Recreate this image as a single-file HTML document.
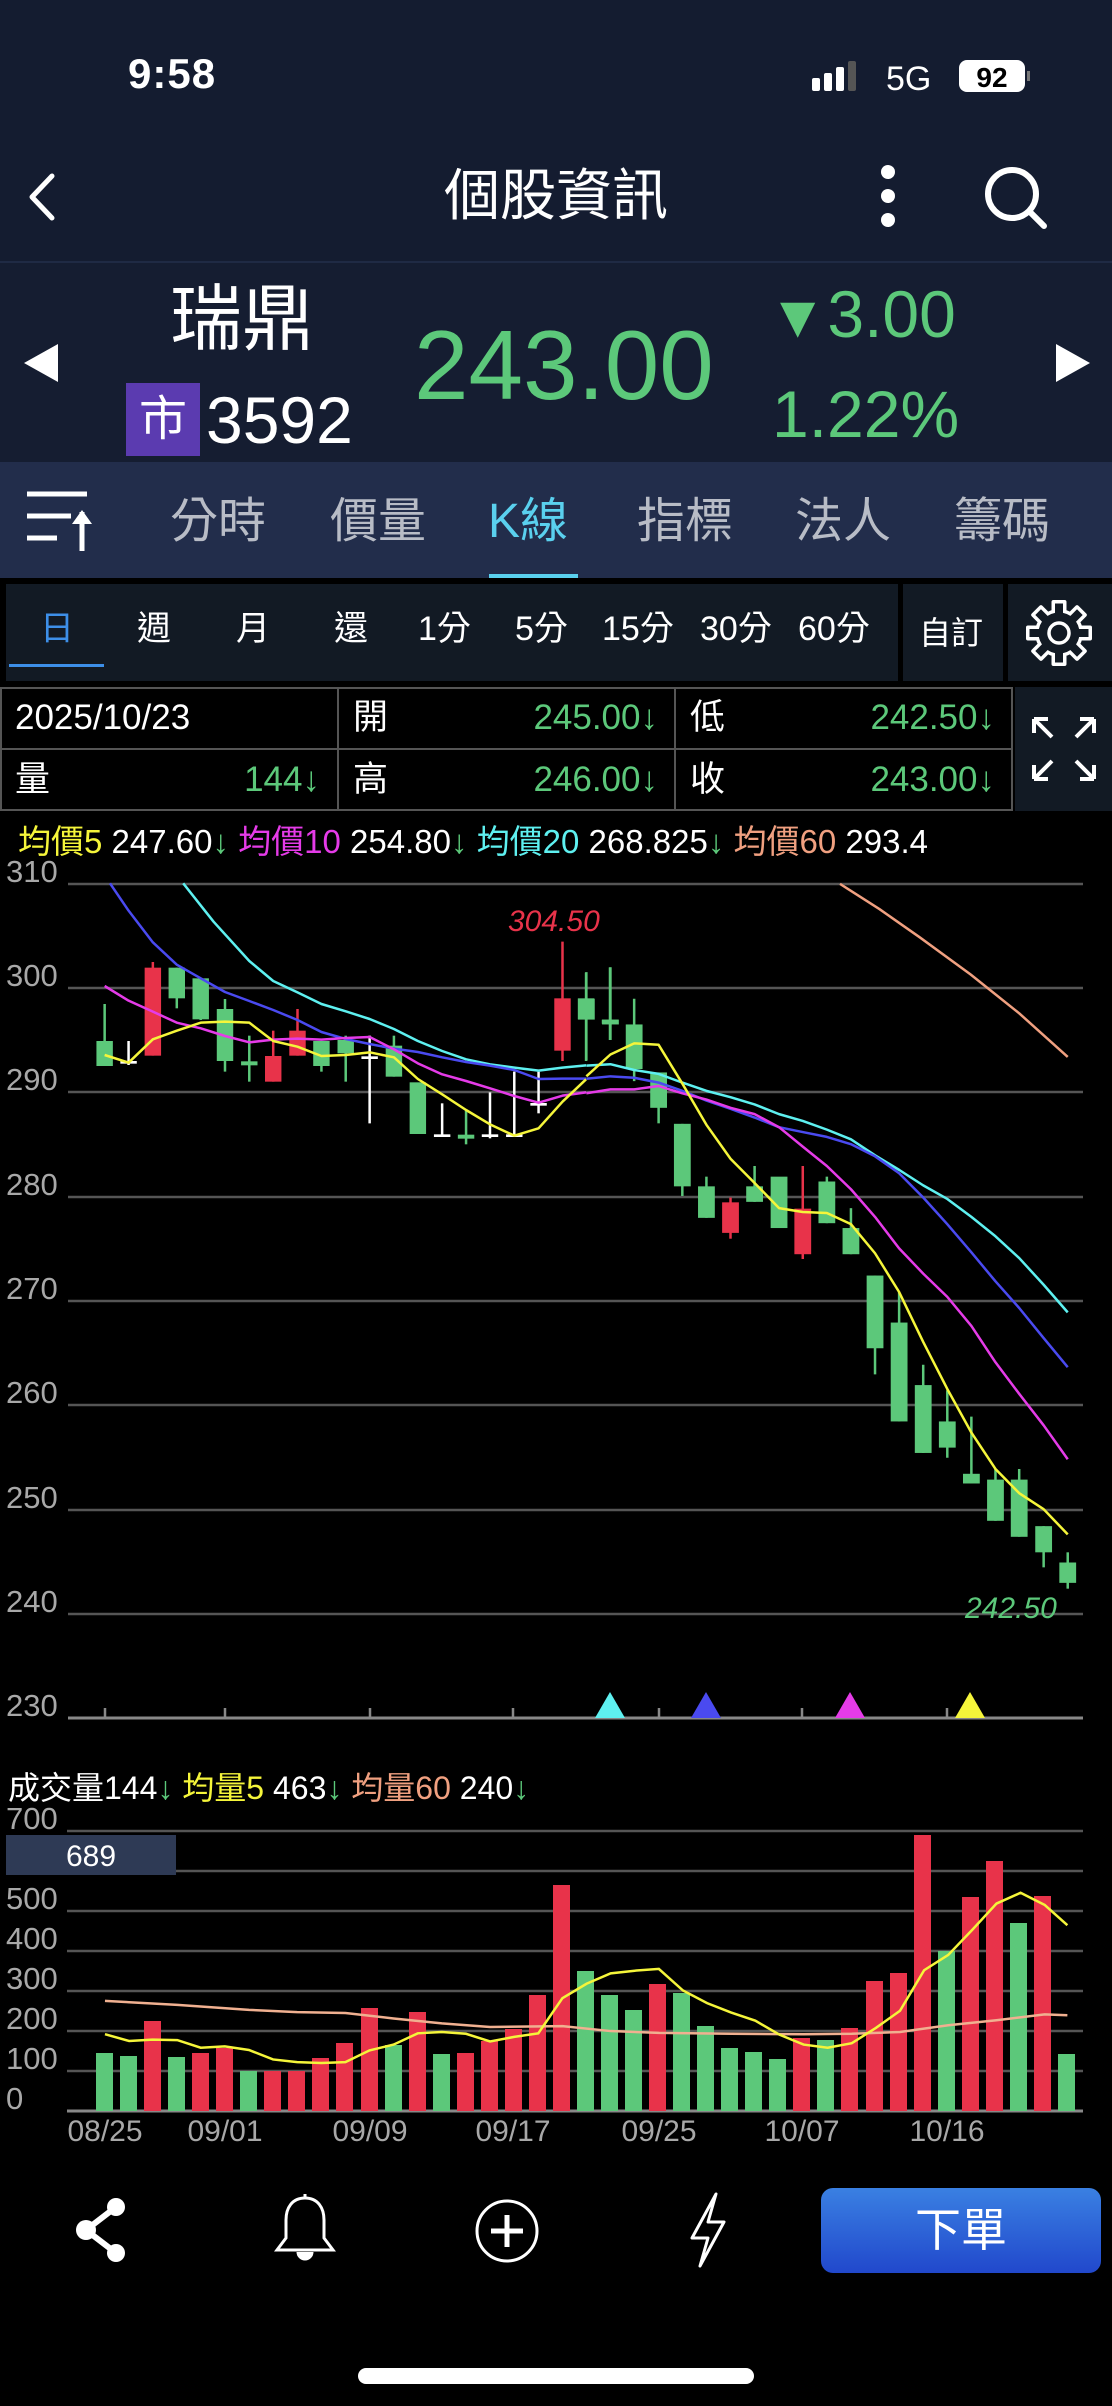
<!DOCTYPE html>
<html><head><meta charset="utf-8"><style>
*{margin:0;padding:0;box-sizing:border-box}
body{width:1112px;height:2406px;background:#000;position:relative;overflow:hidden;font-family:"Liberation Sans","Noto Sans CJK TC",sans-serif;color:#fff}
.a{position:absolute;white-space:nowrap}
.g{color:#5cc87a}
</style></head><body>
<div class="a" style="left:0;top:0;width:1112px;height:261px;background:#141c30"></div>
<div class="a" style="left:0;top:261px;width:1112px;height:2px;background:#1f2a44"></div>
<div class="a" style="left:0;top:263px;width:1112px;height:199px;background:#151d31"></div>
<div class="a" style="left:0;top:462px;width:1112px;height:116px;background:#222d4b"></div>

<div class="a" style="left:128px;top:50px;font-size:42px;font-weight:bold;letter-spacing:1px">9:58</div>
<svg class="a" style="left:810px;top:60px" width="230" height="34">
<rect x="2" y="18" width="8" height="13" rx="2" fill="#fff"/><rect x="14" y="13" width="8" height="18" rx="2" fill="#fff"/><rect x="26" y="7" width="8" height="24" rx="2" fill="#fff"/><rect x="38" y="1" width="8" height="30" rx="2" fill="#555"/>
<text x="76" y="30" font-size="34" fill="#fff" font-family="Liberation Sans">5G</text>
<rect x="149" y="0" width="66" height="32" rx="8" fill="#fff"/><text x="182" y="27" font-size="28" font-weight="bold" fill="#000" text-anchor="middle" font-family="Liberation Sans">92</text><rect x="217" y="11" width="3" height="10" fill="#777"/>
</svg>
<svg class="a" style="left:22px;top:170px" width="40" height="54"><path d="M30 6 L10 27 L30 48" stroke="#fff" stroke-width="5" fill="none" stroke-linecap="round" stroke-linejoin="round"/></svg>
<div class="a" style="left:430px;top:160px;width:252px;text-align:center;font-size:56px;line-height:72px">個股資訊</div>
<svg class="a" style="left:870px;top:160px" width="36" height="72"><circle cx="18" cy="12" r="7" fill="#fff"/><circle cx="18" cy="36" r="7" fill="#fff"/><circle cx="18" cy="60" r="7" fill="#fff"/></svg>
<svg class="a" style="left:980px;top:162px" width="70" height="70"><circle cx="32" cy="32" r="24" stroke="#fff" stroke-width="6" fill="none"/><path d="M50 50 L64 64" stroke="#fff" stroke-width="6" stroke-linecap="round"/></svg>

<svg class="a" style="left:20px;top:342px" width="44" height="42"><path d="M38 2 L38 40 L4 21Z" fill="#fff"/></svg>
<svg class="a" style="left:1050px;top:342px" width="44" height="42"><path d="M6 2 L6 40 L40 21Z" fill="#fff"/></svg>
<div class="a" style="left:170px;top:272px;font-size:72px;line-height:96px">瑞鼎</div>
<div class="a" style="left:126px;top:383px;width:74px;height:73px;background:#5b3bb0;font-size:48px;text-align:center;line-height:73px">市</div>
<div class="a" style="left:206px;top:380px;font-size:66px;line-height:80px">3592</div>
<div class="a g" style="left:414px;top:305px;font-size:98px;line-height:120px">243.00</div>
<div class="a g" style="left:768px;top:274px;font-size:66px;line-height:80px"><span style="font-size:60px">▼</span>3.00</div>
<div class="a g" style="left:772px;top:374px;font-size:66px;line-height:80px">1.22%</div>

<svg class="a" style="left:25px;top:490px" width="70" height="64"><path d="M2 4H62M2 26H46M2 48H32" stroke="#fff" stroke-width="5"/><path d="M57 61V22" stroke="#fff" stroke-width="5"/><path d="M47 34L57 20L67 34Z" fill="#fff"/></svg>
<div class="a" style="left:170px;top:490px;font-size:48px;line-height:64px;color:#b8bcc6">分時</div>
<div class="a" style="left:330px;top:490px;font-size:48px;line-height:64px;color:#b8bcc6">價量</div>
<div class="a" style="left:488px;top:490px;font-size:48px;line-height:64px;color:#5ad0ee">K線</div>
<div class="a" style="left:637px;top:490px;font-size:48px;line-height:64px;color:#b8bcc6">指標</div>
<div class="a" style="left:795px;top:490px;font-size:48px;line-height:64px;color:#b8bcc6">法人</div>
<div class="a" style="left:954px;top:490px;font-size:48px;line-height:64px;color:#b8bcc6">籌碼</div>
<div class="a" style="left:489px;top:574px;width:89px;height:4px;background:#5ad0ee"></div>

<div class="a" style="left:6px;top:584px;width:892px;height:97px;background:#121a24"></div>
<div class="a" style="left:903px;top:584px;width:100px;height:97px;background:#121a24"></div>
<div class="a" style="left:1008px;top:584px;width:104px;height:97px;background:#121a24"></div>
<div class="a" style="left:9px;top:664px;width:95px;height:3px;background:#3d8fe8"></div>
<div style="position:absolute;top:606px;left:0;font-size:34px;line-height:46px">
<span class="a" style="left:40px;color:#3d8fe8">日</span><span class="a" style="left:137px">週</span><span class="a" style="left:236px">月</span><span class="a" style="left:334px">還</span><span class="a" style="left:418px">1分</span><span class="a" style="left:515px">5分</span><span class="a" style="left:602px">15分</span><span class="a" style="left:700px">30分</span><span class="a" style="left:798px">60分</span><span class="a" style="left:919px;top:4px;font-size:32px">自訂</span></div>
<svg class="a" style="left:1024px;top:598px" width="70" height="70"><g transform="translate(35,35)">
<g fill="#fff"><circle r="24"/><g id="t"><rect x="-7.5" y="-33" width="15" height="20" rx="2"/></g><use href="#t" transform="rotate(45)"/><use href="#t" transform="rotate(90)"/><use href="#t" transform="rotate(135)"/><use href="#t" transform="rotate(180)"/><use href="#t" transform="rotate(225)"/><use href="#t" transform="rotate(270)"/><use href="#t" transform="rotate(315)"/></g>
<g fill="#121a24"><circle r="20.5"/><g id="u"><rect x="-4" y="-29.5" width="8" height="20"/></g><use href="#u" transform="rotate(45)"/><use href="#u" transform="rotate(90)"/><use href="#u" transform="rotate(135)"/><use href="#u" transform="rotate(180)"/><use href="#u" transform="rotate(225)"/><use href="#u" transform="rotate(270)"/><use href="#u" transform="rotate(315)"/></g>
<circle r="10" fill="none" stroke="#fff" stroke-width="3.5"/></g></svg>
<div class="a" style="left:0;top:687px;width:1013px;height:124px;border:2px solid #555;background:#000"></div>
<div class="a" style="left:0;top:748px;width:1013px;height:2px;background:#555"></div>
<div class="a" style="left:337px;top:687px;width:2px;height:124px;background:#555"></div>
<div class="a" style="left:674px;top:687px;width:2px;height:124px;background:#555"></div>
<div class="a" style="left:1015px;top:687px;width:97px;height:124px;background:#121a24"></div>
<div style="position:absolute;left:0;top:0;font-size:35px;line-height:44px">
<span class="a" style="left:15px;top:696px">2025/10/23</span>
<span class="a" style="left:15px;top:758px">量</span><span class="a g" style="left:220px;top:758px;width:100px;text-align:right">144↓</span>
<span class="a" style="left:353px;top:696px">開</span><span class="a g" style="left:450px;top:696px;width:208px;text-align:right">245.00↓</span>
<span class="a" style="left:353px;top:758px">高</span><span class="a g" style="left:450px;top:758px;width:208px;text-align:right">246.00↓</span>
<span class="a" style="left:690px;top:696px">低</span><span class="a g" style="left:787px;top:696px;width:208px;text-align:right">242.50↓</span>
<span class="a" style="left:690px;top:758px">收</span><span class="a g" style="left:787px;top:758px;width:208px;text-align:right">243.00↓</span>
</div>
<svg class="a" style="left:1030px;top:715px" width="68" height="68" fill="none" stroke="#fff" stroke-width="4"><path d="M4 4L22 22M4 4V18M4 4H18"/><path d="M64 4L46 22M64 4V18M64 4H50"/><path d="M4 64L22 46M4 64V50M4 64H18"/><path d="M64 64L46 46M64 64V50M64 64H50"/></svg>

<div class="a" style="left:18px;top:822px;font-size:33px;line-height:40px"><span style="color:#f5f53a">均價5</span> 247.60<span class="g">↓</span> <span style="color:#e53be8">均價10</span> 254.80<span class="g">↓</span> <span style="color:#5ef0f0">均價20</span> 268.825<span class="g">↓</span> <span style="color:#f0a080">均價60</span> 293.4</div>

<svg class="a" style="left:0;top:0" width="1112" height="2406">
<g stroke="#555" stroke-width="2.5">
<path d="M68 884H1083M68 988H1083M68 1092H1083M68 1197H1083M68 1301H1083M68 1405H1083M68 1510H1083M68 1614H1083"/>
<path d="M68 1718H1083" stroke="#888" stroke-width="3"/>
<path d="M105 1718v-10M225 1718v-10M370 1718v-10M513 1718v-10M659 1718v-10M802 1718v-10M947 1718v-10" stroke="#888"/>
<path d="M67 1831H1083M67 1871H1083M67 1911H1083M67 1951H1083M67 1991H1083M67 2031H1083M67 2071H1083"/>
<path d="M67 2111H1083" stroke="#888" stroke-width="3"/>
</g>
<g font-size="31" fill="#a8a8a8" font-family="Liberation Sans">
<text x="6" y="882">310</text><text x="6" y="986">300</text><text x="6" y="1090">290</text><text x="6" y="1195">280</text><text x="6" y="1299">270</text><text x="6" y="1403">260</text><text x="6" y="1508">250</text><text x="6" y="1612">240</text><text x="6" y="1716">230</text>
<text x="6" y="1829">700</text><text x="6" y="1909">500</text><text x="6" y="1949">400</text><text x="6" y="1989">300</text><text x="6" y="2029">200</text><text x="6" y="2069">100</text><text x="6" y="2109">0</text>
</g>
<g font-size="30" fill="#a8a8a8" font-family="Liberation Sans" text-anchor="middle">
<text x="105" y="2141">08/25</text><text x="225" y="2141">09/01</text><text x="370" y="2141">09/09</text><text x="513" y="2141">09/17</text><text x="659" y="2141">09/25</text><text x="802" y="2141">10/07</text><text x="947" y="2141">10/16</text>
</g>
<path d="M595 1718L610 1692L625 1718Z" fill="#5ef0f0"/><path d="M691 1718L706 1692L721 1718Z" fill="#4a4af0"/><path d="M835 1718L850 1692L865 1718Z" fill="#e53be8"/><path d="M955 1718L970 1692L985 1718Z" fill="#f5f53a"/>

<g transform="translate(60,880) scale(0.35714,0.33333)">
<g stroke="#5cc87a">
<line x1="125" y1="372" x2="125" y2="558" vector-effect="non-scaling-stroke" stroke-width="2.5"/>
<line x1="327" y1="263" x2="327" y2="385" vector-effect="non-scaling-stroke" stroke-width="2.5"/>
<line x1="394" y1="295" x2="394" y2="420" vector-effect="non-scaling-stroke" stroke-width="2.5"/>
<line x1="462" y1="357" x2="462" y2="575" vector-effect="non-scaling-stroke" stroke-width="2.5"/>
<line x1="530" y1="467" x2="530" y2="605" vector-effect="non-scaling-stroke" stroke-width="2.5"/>
<line x1="732" y1="483" x2="732" y2="575" vector-effect="non-scaling-stroke" stroke-width="2.5"/>
<line x1="800" y1="467" x2="800" y2="605" vector-effect="non-scaling-stroke" stroke-width="2.5"/>
<line x1="935" y1="467" x2="935" y2="590" vector-effect="non-scaling-stroke" stroke-width="2.5"/>
<line x1="1137" y1="690" x2="1137" y2="793" vector-effect="non-scaling-stroke" stroke-width="2.5"/>
<line x1="1473" y1="278" x2="1473" y2="543" vector-effect="non-scaling-stroke" stroke-width="2.5"/>
<line x1="1540" y1="262" x2="1540" y2="480" vector-effect="non-scaling-stroke" stroke-width="2.5"/>
</g>
<g stroke="#e8334a">
<line x1="260" y1="246" x2="260" y2="527" vector-effect="non-scaling-stroke" stroke-width="2.5"/>
<line x1="597" y1="452" x2="597" y2="605" vector-effect="non-scaling-stroke" stroke-width="2.5"/>
<line x1="665" y1="387" x2="665" y2="527" vector-effect="non-scaling-stroke" stroke-width="2.5"/>
<line x1="1407" y1="185" x2="1407" y2="543" vector-effect="non-scaling-stroke" stroke-width="2.5"/>
</g>
<g stroke="#fff">
<line x1="192" y1="483" x2="192" y2="555" vector-effect="non-scaling-stroke" stroke-width="2.5"/>
<line x1="867" y1="467" x2="867" y2="730" vector-effect="non-scaling-stroke" stroke-width="2.5"/>
<line x1="1070" y1="670" x2="1070" y2="767" vector-effect="non-scaling-stroke" stroke-width="2.5"/>
<line x1="1204" y1="637" x2="1204" y2="775" vector-effect="non-scaling-stroke" stroke-width="2.5"/>
<line x1="1272" y1="575" x2="1272" y2="767" vector-effect="non-scaling-stroke" stroke-width="2.5"/>
<line x1="1340" y1="575" x2="1340" y2="700" vector-effect="non-scaling-stroke" stroke-width="2.5"/>
</g>
<g fill="#5cc87a">
<rect x="102" y="483" width="46" height="75"/><rect x="304" y="263" width="46" height="92"/><rect x="371" y="295" width="46" height="123"/><rect x="439" y="387" width="46" height="156"/><rect x="507" y="544" width="46" height="12"/><rect x="709" y="483" width="46" height="75"/><rect x="777" y="480" width="46" height="40"/><rect x="912" y="497" width="46" height="93"/><rect x="979" y="607" width="46" height="155"/><rect x="1114" y="764" width="46" height="12"/><rect x="1450" y="355" width="46" height="63"/><rect x="1517" y="419" width="46" height="12"/>
</g>
<g fill="#e8334a"><rect x="237" y="263" width="46" height="264"/><rect x="574" y="528" width="46" height="77"/><rect x="642" y="452" width="46" height="75"/><rect x="1384" y="355" width="46" height="157"/></g>
<g fill="#fff"><rect x="169" y="543" width="46" height="8"/><rect x="844" y="529" width="46" height="8"/><rect x="1047" y="763" width="46" height="8"/><rect x="1181" y="763" width="46" height="8"/><rect x="1249" y="763" width="46" height="8"/><rect x="1317" y="669" width="46" height="8"/></g>
<g fill="none" stroke-width="2.5" stroke-linejoin="round">
<polyline vector-effect="non-scaling-stroke" stroke="#5ef0f0" points="345,10 430,125 530,243 597,303 665,337 732,372 800,394 867,417 935,447 1002,483 1070,513 1137,538 1204,553 1272,563 1340,572 1407,563 1473,556"/>
<polyline vector-effect="non-scaling-stroke" stroke="#4a4af0" points="140,10 192,92 260,187 327,254 394,295 462,336 530,363 597,390 665,420 732,456 800,477 867,492 935,506 1002,516 1070,532 1137,546 1204,557 1272,570 1340,597 1407,596 1473,596"/>
<polyline vector-effect="non-scaling-stroke" stroke="#e53be8" points="125,318 192,362 260,395 327,428 394,445 462,468 530,487 597,479 665,476 732,479 800,474 867,471 935,508 1002,550 1070,583 1137,603 1204,625 1272,648 1340,668 1407,647 1473,637"/>
<polyline vector-effect="non-scaling-stroke" stroke="#f5f53a" points="125,525 192,548 260,478 327,452 394,428 462,425 530,428 597,483 665,500 732,528 800,525 867,517 935,532 1002,597 1070,643 1137,690 1204,733 1272,767 1340,745 1407,665 1473,598"/>
</g>
</g>
<text x="508" y="931" font-size="30" fill="#e8334a" font-style="italic" font-family="Liberation Sans">304.50</text>
<text x="965" y="1618" font-size="30" fill="#5cc87a" font-style="italic" font-family="Liberation Sans">242.50</text>

<g transform="translate(540,880) scale(0.36496,0.48473)">
<g stroke="#5cc87a">
<line x1="127" y1="190" x2="127" y2="372" vector-effect="non-scaling-stroke" stroke-width="2.5"/>
<line x1="193" y1="180" x2="193" y2="330" vector-effect="non-scaling-stroke" stroke-width="2.5"/>
<line x1="258" y1="245" x2="258" y2="415" vector-effect="non-scaling-stroke" stroke-width="2.5"/>
<line x1="325" y1="397" x2="325" y2="502" vector-effect="non-scaling-stroke" stroke-width="2.5"/>
<line x1="390" y1="503" x2="390" y2="652" vector-effect="non-scaling-stroke" stroke-width="2.5"/>
<line x1="456" y1="612" x2="456" y2="697" vector-effect="non-scaling-stroke" stroke-width="2.5"/>
<line x1="588" y1="590" x2="588" y2="664" vector-effect="non-scaling-stroke" stroke-width="2.5"/>
<line x1="786" y1="612" x2="786" y2="708" vector-effect="non-scaling-stroke" stroke-width="2.5"/>
<line x1="852" y1="677" x2="852" y2="772" vector-effect="non-scaling-stroke" stroke-width="2.5"/>
<line x1="918" y1="816" x2="918" y2="1020" vector-effect="non-scaling-stroke" stroke-width="2.5"/>
<line x1="984" y1="850" x2="984" y2="1117" vector-effect="non-scaling-stroke" stroke-width="2.5"/>
<line x1="1050" y1="1000" x2="1050" y2="1182" vector-effect="non-scaling-stroke" stroke-width="2.5"/>
<line x1="1116" y1="1053" x2="1116" y2="1192" vector-effect="non-scaling-stroke" stroke-width="2.5"/>
<line x1="1182" y1="1107" x2="1182" y2="1245" vector-effect="non-scaling-stroke" stroke-width="2.5"/>
<line x1="1248" y1="1215" x2="1248" y2="1322" vector-effect="non-scaling-stroke" stroke-width="2.5"/>
<line x1="1313" y1="1215" x2="1313" y2="1355" vector-effect="non-scaling-stroke" stroke-width="2.5"/>
<line x1="1380" y1="1333" x2="1380" y2="1418" vector-effect="non-scaling-stroke" stroke-width="2.5"/>
<line x1="1446" y1="1387" x2="1446" y2="1462" vector-effect="non-scaling-stroke" stroke-width="2.5"/>
</g>
<g stroke="#e8334a">
<line x1="522" y1="655" x2="522" y2="740" vector-effect="non-scaling-stroke" stroke-width="2.5"/>
<line x1="720" y1="590" x2="720" y2="782" vector-effect="non-scaling-stroke" stroke-width="2.5"/>
</g>
<g fill="#5cc87a">
<rect x="104" y="245" width="46" height="43"/><rect x="170" y="288" width="46" height="10"/><rect x="235" y="298" width="46" height="92"/><rect x="302" y="397" width="46" height="73"/><rect x="367" y="503" width="46" height="129"/><rect x="433" y="632" width="46" height="65"/><rect x="565" y="632" width="46" height="32"/><rect x="632" y="612" width="46" height="106"/><rect x="763" y="622" width="46" height="86"/><rect x="829" y="718" width="46" height="54"/><rect x="895" y="816" width="46" height="150"/><rect x="961" y="913" width="46" height="204"/><rect x="1027" y="1042" width="46" height="140"/><rect x="1093" y="1117" width="46" height="54"/><rect x="1159" y="1225" width="46" height="20"/><rect x="1225" y="1237" width="46" height="85"/><rect x="1290" y="1237" width="46" height="118"/><rect x="1357" y="1333" width="46" height="54"/><rect x="1423" y="1408" width="46" height="42"/>
</g>
<g fill="#e8334a"><rect x="499" y="665" width="46" height="63"/><rect x="697" y="678" width="46" height="94"/></g>
<g fill="none" stroke-width="2.5" stroke-linejoin="round">
<polyline vector-effect="non-scaling-stroke" stroke="#f0a080" points="822,8 930,60 1040,118 1180,195 1313,275 1446,365"/>
<polyline vector-effect="non-scaling-stroke" stroke="#5ef0f0" points="127,383 193,380 258,392 325,400 390,418 456,435 522,448 588,463 655,483 720,497 786,515 852,535 918,568 984,598 1050,630 1116,658 1182,695 1248,735 1313,780 1380,835 1446,892"/>
<polyline vector-effect="non-scaling-stroke" stroke="#4a4af0" points="127,410 193,405 258,408 325,418 390,435 456,455 522,472 588,490 655,510 720,520 786,530 852,545 918,570 984,605 1050,655 1116,710 1182,768 1248,828 1313,883 1380,945 1446,1005"/>
<polyline vector-effect="non-scaling-stroke" stroke="#e53be8" points="127,440 193,432 258,432 325,425 390,440 456,453 522,470 588,483 655,510 720,550 786,590 852,638 918,695 984,760 1050,812 1116,860 1182,920 1248,995 1313,1060 1380,1125 1446,1195"/>
<polyline vector-effect="non-scaling-stroke" stroke="#f5f53a" points="127,405 193,360 258,337 325,340 390,420 456,505 522,575 588,625 655,677 720,685 786,687 852,710 918,770 984,850 1050,953 1116,1050 1182,1140 1248,1215 1313,1265 1380,1298 1446,1350"/>
</g>
</g>

<g>
<rect x="96" y="2053" width="17" height="58" fill="#5cc87a"/><rect x="120" y="2056" width="17" height="55" fill="#5cc87a"/><rect x="144" y="2021" width="17" height="90" fill="#e8334a"/><rect x="168" y="2057" width="17" height="54" fill="#5cc87a"/><rect x="192" y="2053" width="17" height="58" fill="#e8334a"/><rect x="216" y="2048" width="17" height="63" fill="#e8334a"/><rect x="240" y="2071" width="17" height="40" fill="#5cc87a"/><rect x="264" y="2071" width="17" height="40" fill="#e8334a"/><rect x="288" y="2071" width="17" height="40" fill="#e8334a"/><rect x="312" y="2058" width="17" height="53" fill="#e8334a"/><rect x="336" y="2043" width="17" height="68" fill="#e8334a"/><rect x="361" y="2008" width="17" height="103" fill="#e8334a"/><rect x="385" y="2045" width="17" height="66" fill="#5cc87a"/><rect x="409" y="2012" width="17" height="99" fill="#e8334a"/><rect x="433" y="2054" width="17" height="57" fill="#5cc87a"/><rect x="457" y="2053" width="17" height="58" fill="#e8334a"/><rect x="481" y="2041" width="17" height="70" fill="#e8334a"/><rect x="505" y="2029" width="17" height="82" fill="#e8334a"/><rect x="529" y="1995" width="17" height="116" fill="#e8334a"/><rect x="553" y="1885" width="17" height="226" fill="#e8334a"/><rect x="577" y="1971" width="17" height="140" fill="#5cc87a"/><rect x="601" y="1995" width="17" height="116" fill="#5cc87a"/><rect x="625" y="2010" width="17" height="101" fill="#5cc87a"/><rect x="649" y="1984" width="17" height="127" fill="#e8334a"/><rect x="673" y="1993" width="17" height="118" fill="#5cc87a"/><rect x="697" y="2026" width="17" height="85" fill="#5cc87a"/><rect x="721" y="2048" width="17" height="63" fill="#5cc87a"/><rect x="745" y="2052" width="17" height="59" fill="#5cc87a"/><rect x="769" y="2059" width="17" height="52" fill="#5cc87a"/><rect x="793" y="2038" width="17" height="73" fill="#e8334a"/><rect x="817" y="2040" width="17" height="71" fill="#5cc87a"/><rect x="841" y="2028" width="17" height="83" fill="#e8334a"/><rect x="866" y="1981" width="17" height="130" fill="#e8334a"/><rect x="890" y="1973" width="17" height="138" fill="#e8334a"/><rect x="914" y="1835" width="17" height="276" fill="#e8334a"/><rect x="938" y="1951" width="17" height="160" fill="#5cc87a"/><rect x="962" y="1897" width="17" height="214" fill="#e8334a"/><rect x="986" y="1861" width="17" height="250" fill="#e8334a"/><rect x="1010" y="1923" width="17" height="188" fill="#5cc87a"/><rect x="1034" y="1896" width="17" height="215" fill="#e8334a"/><rect x="1058" y="2054" width="17" height="57" fill="#5cc87a"/>
</g>
<g transform="translate(0,1700) scale(0.70922,0.45042)" fill="none" stroke-width="2.5">
<polyline vector-effect="non-scaling-stroke" stroke="#f0b090" points="148,668 250,677 351,688 419,693 487,695 555,707 623,718 691,726 793,724 861,735 929,739 1031,741 1133,742 1201,741 1269,737 1337,722 1405,711 1473,698 1505,700"/>
<polyline vector-effect="non-scaling-stroke" stroke="#f5f53a" points="148,742 182,757 215,754 250,755 283,772 317,769 351,777 385,798 419,804 453,806 487,804 521,778 555,765 589,740 623,737 657,741 691,758 725,748 759,740 793,662 827,630 861,607 895,601 929,597 963,645 997,673 1031,694 1065,712 1099,743 1133,765 1167,772 1201,762 1235,728 1269,690 1303,600 1337,566 1371,510 1405,452 1439,428 1473,455 1505,500"/>
</g>
<rect x="6" y="1835" width="170" height="40" fill="#2e3a55"/>
<text x="91" y="1866" font-size="30" fill="#fff" text-anchor="middle" font-family="Liberation Sans">689</text>
</svg>
<div class="a" style="left:8px;top:1768px;font-size:32px;line-height:40px">成交量144<span class="g">↓</span> <span style="color:#f5f53a">均量5</span> 463<span class="g">↓</span> <span style="color:#f0a080">均量60</span> 240<span class="g">↓</span></div>

<svg class="a" style="left:70px;top:2195px" width="64" height="70"><path d="M46 12L16 35L46 58" stroke="#fff" stroke-width="6" fill="none"/><circle cx="46" cy="12" r="9" fill="#fff"/><circle cx="16" cy="35" r="10" fill="#fff"/><circle cx="46" cy="58" r="9" fill="#fff"/></svg>
<svg class="a" style="left:270px;top:2192px" width="70" height="76" fill="none" stroke="#fff" stroke-width="3"><path d="M35 6C22 6 16 16 16 28V46L7 58H63L54 46V28C54 16 48 6 35 6Z"/><path d="M35 2V6"/><path d="M28 60A7 7 0 0 0 42 60" fill="#fff"/></svg>
<svg class="a" style="left:474px;top:2198px" width="66" height="66" fill="none" stroke="#fff" stroke-width="3"><circle cx="33" cy="33" r="30"/><path d="M33 17V49M17 33H49" stroke-width="5"/></svg>
<svg class="a" style="left:688px;top:2190px" width="40" height="80" fill="none" stroke="#fff" stroke-width="3" stroke-linejoin="round"><path d="M28 4L4 48H20L12 76L36 32H20Z"/></svg>
<div class="a" style="left:821px;top:2188px;width:280px;height:85px;border-radius:12px;background:linear-gradient(#3a80e2,#2148cc);text-align:center;font-size:46px;line-height:85px">下單</div>
<div class="a" style="left:358px;top:2368px;width:396px;height:16px;border-radius:8px;background:#fff"></div>
</body></html>
